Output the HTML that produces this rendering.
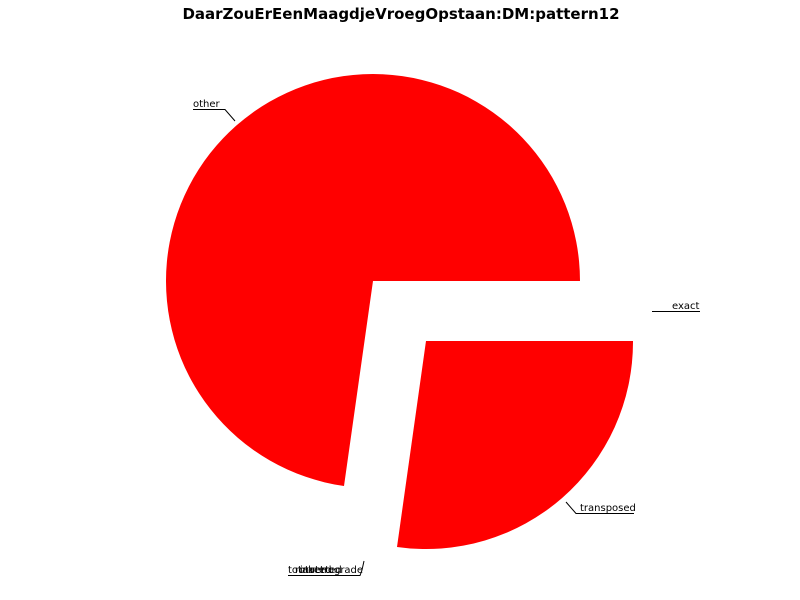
<!DOCTYPE html>
<html><head><meta charset="utf-8"><style>
html,body{margin:0;padding:0;background:#fff;width:800px;height:600px;overflow:hidden}
svg text{font-family:"DejaVu Sans","Liberation Sans",sans-serif}
</style></head><body>
<svg width="800" height="600" viewBox="0 0 800 600">
<text x="401" y="19" text-anchor="middle" font-size="15" font-weight="bold">DaarZouErEenMaagdjeVroegOpstaan:DM:pattern12</text>
<path d="M373,281 L580,281 A207,207 0 1 0 344,486 Z" fill="#ff0000"/>
<path d="M426,341 L633,341 A207,207 0 0 1 397,547 Z" fill="#ff0000"/>
<g stroke="#000" stroke-width="1" fill="none">
<polyline points="193,109.5 225,109.5 235,121"/>
<polyline points="652,311.5 700,311.5"/>
<polyline points="566,502 576,513.5 634,513.5"/>
<polyline points="288,575.5 360,575.5 362,570 364,561"/>
</g>
<g font-size="10" fill="#000">
<text x="193" y="107">other</text>
<text x="672" y="309">exact</text>
<text x="580" y="511">transposed</text>
<text x="288" y="573">total</text>
<text x="295" y="573">rotated</text>
<text x="300" y="573">inverted</text>
<text x="310" y="573">retrograde</text>
</g>
</svg>
</body></html>
